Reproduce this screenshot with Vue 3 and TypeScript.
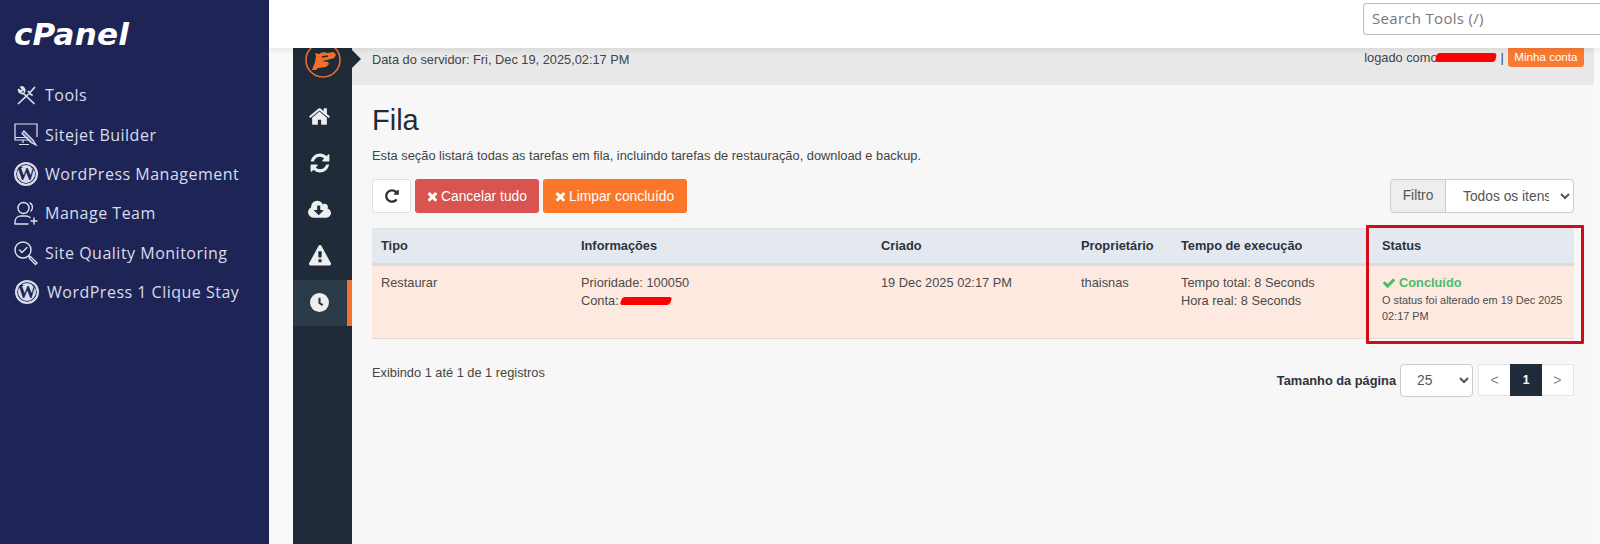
<script setup lang="ts">
const faHome = 'M1472 992v480q0 26-19 45t-45 19h-384v-384h-256v384h-384q-26 0-45-19t-19-45v-480q0-1 .5-3t.5-3l575-474 575 474q1 2 1 6zm223-69l-62 74q-8 9-21 11h-3q-13 0-21-7l-692-577-692 577q-12 8-24 7-13-2-21-11l-62-74q-8-10-7-23.5t11-21.5l719-599q32-26 76-26t76 26l244 204v-195q0-14 9-23t23-9h192q14 0 23 9t9 23v408l219 182q10 8 11 21.5t-7 23.5z'
const faRefresh = 'M1639 1056q0 5-1 7-64 268-268 434.500t-478 166.500q-146 0-282.500-55t-243.500-157l-129 129q-19 19-45 19t-45-19-19-45v-448q0-26 19-45t45-19h448q26 0 45 19t19 45-19 45l-137 137q71 66 161 102t187 36q134 0 250-65t186-179q11-17 53-117 8-23 30-23h192q13 0 22.500 9.500t9.500 22.500zm25-800v448q0 26-19 45t-45 19h-448q-26 0-45-19t-19-45 19-45l138-138q-148-137-349-137-134 0-250 65t-186 179q-11 17-53 117-8 23-30 23h-199q-13 0-22.500-9.500t-9.500-22.500v-7q65-268 270-434.500t480-166.500q146 0 284 55.500t245 156.500l130-129q19-19 45-19t45 19 19 45z'
const faCloud = 'M1280 928q0-14-9-23t-23-9h-224v-352q0-13-9.500-22.500t-22.500-9.500h-192q-13 0-22.500 9.500t-9.500 22.500v352h-224q-13 0-22.500 9.500t-9.500 22.500q0 14 9 23l352 352q9 9 23 9t23-9l351-351q10-12 10-24zm640 224q0 159-112.500 271.500t-271.500 112.500h-1088q-185 0-316.500-131.500t-131.500-316.500q0-130 70-240t188-165q-2-30-2-43 0-212 150-362t362-150q156 0 285.500 87t188.500 231q71-62 166-62 106 0 181 75t75 181q0 76-41 138 130 31 213.500 135.500t83.500 238.500z'
const faWarn = 'M1024 1375v-190q0-14-9.500-23.500t-22.500-9.500h-192q-13 0-22.500 9.500t-9.500 23.500v190q0 14 9.500 23.500t22.500 9.500h192q13 0 22.500-9.500t9.500-23.500zm-2-374l18-459q0-12-10-19-13-11-24-11h-220q-11 0-24 11-10 7-10 21l17 457q0 10 10 16.500t24 6.500h185q14 0 23.500-6.500t10.500-16.500zm-14-934l768 1408q35 63-2 126-17 29-46.500 46t-63.500 17h-1536q-34 0-63.500-17t-46.500-46q-37-63-2-126l768-1408q17-31 47-49t65-18 65 18 47 49z'
const faTimes = 'M1490 1322q0 40-28 68l-136 136q-28 28-68 28t-68-28l-294-294-294 294q-28 28-68 28t-68-28l-136-136q-28-28-28-68t28-68l294-294-294-294q-28-28-28-68t28-68l136-136q28-28 68-28t68 28l294 294 294-294q28-28 68-28t68 28l136 136q28 28 28 68t-28 68l-294 294 294 294q28 28 28 68z'
const faCheck = 'M1671 566q0 40-28 68l-724 724-136 136q-28 28-68 28t-68-28l-136-136-362-362q-28-28-28-68t28-68l136-136q28-28 68-28t68 28l294 295 656-657q28-28 68-28t68 28l136 136q28 28 28 68z'
const faRotate = 'M1664 256v448q0 26-19 45t-45 19h-448q-42 0-59-40-17-39 14-69l138-138q-148-137-349-137-104 0-198.500 40.500t-163.500 109.500-109.500 163.500-40.500 198.500 40.500 198.500 109.500 163.500 163.500 109.500 198.500 40.500q119 0 225-52t179-147q7-10 23-12 15 0 25 9l137 138q9 8 9.500 20.500t-7.500 22.500q-109 132-264 204.500t-327 72.500q-156 0-298-61t-245-164-164-245-61-298 61-298 164-245 245-164 298-61q147 0 284.500 55.500t244.500 156.500l130-129q29-31 70-14 39 17 39 59z'
</script>

<template>
  <div class="page">
    <aside class="side">
      <div class="logo">cPanel</div>
      <nav class="menu">
        <a class="item">
          <span class="ic">
            <svg width="22" height="22" viewBox="0 0 22 22" fill="none" stroke="#dfe2ee" stroke-width="1.7" stroke-linecap="round" stroke-linejoin="round">
              <path d="M3.500 19.500 13 10.500M15 8.500l4.500-5" />
              <path d="M13.500 7.500l1.500 2.500 2 1" />
              <path d="M19 19.500 8.500 9.500" />
              <path d="M8.500 9.500C6 10 3.500 8 3.500 5.500L6 7.500l2-1.500-2-3c2.500-.5 4.500 2 3.500 5" />
            </svg>
          </span>
          <span>Tools</span>
        </a>
        <a class="item">
          <span class="ic">
            <svg width="26" height="26" viewBox="0 0 26 26" fill="none" stroke="#dfe2ee" stroke-width="1.2">
              <path d="M17 18H2V2h22v13" />
              <path d="M2 15.500h13M10 18v3M6 22.500h10" />
              <path d="M11 9l9 9 3 5-5-2.500-9-9z" fill="#dfe2ee" fill-opacity=".45" />
            </svg>
          </span>
          <span>Sitejet Builder</span>
        </a>
        <a class="item">
          <span class="ic"><span class="wp">W</span></span>
          <span>WordPress Management</span>
        </a>
        <a class="item">
          <span class="ic">
            <svg width="26" height="26" viewBox="0 0 26 26" fill="none" stroke="#dfe2ee" stroke-width="1.4" stroke-linecap="round">
              <circle cx="10.500" cy="8" r="5.500" />
              <path d="M17 3c2.500 1 3.500 5.500 1 8M2 24v-2c0-4 3-6 6-6h5c1.500 0 3 .5 4 1.500M2 24h13M21 18v6M18 21h6" />
            </svg>
          </span>
          <span>Manage Team</span>
        </a>
        <a class="item">
          <span class="ic">
            <svg width="26" height="26" viewBox="0 0 26 26" fill="none" stroke="#dfe2ee" stroke-width="1.4" stroke-linecap="round">
              <circle cx="10" cy="10" r="8" />
              <path d="m6.500 10 2.500 2.500 5-5" />
              <path d="m16 16 2 1 6 6-1.500 1.500-6-6z" />
            </svg>
          </span>
          <span>Site Quality Monitoring</span>
        </a>
        <a class="item shifted">
          <span class="ic"><span class="wp">W</span></span>
          <span>WordPress 1 Clique Stay</span>
        </a>
      </nav>
    </aside>

    <div class="right">
      <header class="top">
        <div class="search">Search Tools (/)</div>
      </header>

      <div class="body">
        <div class="rail">
          <div class="brand">
            <svg width="36" height="36" viewBox="0 0 36 36">
              <circle cx="18" cy="18" r="17" fill="none" stroke="#f26f2c" stroke-width="1.500" />
              <path d="M7 28l3-8 1-6-1-3 4 1c3-2 6-2 8-1l7-1 2 3-2 3-7 2-5 1 6 1 1 2-3 3-8 1-2 2z" fill="#f26f2c" />
              <path d="M17 15l6-1" stroke="#1f2b38" stroke-width="1.600" fill="none" />
            </svg>
          </div>
          <div class="rail-item"><svg width="23" height="23" viewBox="0 0 1792 1792"><path :d="faHome" /></svg></div>
          <div class="rail-item"><svg width="22" height="22" viewBox="0 0 1792 1792"><path :d="faRefresh" /></svg></div>
          <div class="rail-item"><svg width="23" height="22" viewBox="0 0 1920 1792"><path :d="faCloud" /></svg></div>
          <div class="rail-item"><svg width="22" height="22" viewBox="0 0 1792 1792"><path :d="faWarn" /></svg></div>
          <div class="rail-item active">
            <svg width="19" height="19" viewBox="0 0 18 18">
              <circle cx="9" cy="9" r="9" />
              <path d="M9 4.500V9.500l3 2" fill="none" stroke="#2a3a47" stroke-width="2" />
            </svg>
          </div>
        </div>

        <div class="content">
          <div class="bar">
            <span class="notch"></span>
            <span class="date">Data do servidor: Fri, Dec 19, 2025,02:17 PM</span>
            <span class="who">
              <span class="who-label">logado como</span><span class="scrib s1"></span><span class="sep">|</span>
              <span class="acct">Minha conta</span>
            </span>
          </div>

          <main class="main">
            <h1>Fila</h1>
            <p class="desc">Esta seção listará todas as tarefas em fila, incluindo tarefas de restauração, download e backup.</p>

            <div class="tools">
              <button class="btn plain"><svg width="16" height="16" viewBox="0 0 1792 1792"><path :d="faRotate" /></svg></button>
              <button class="btn red"><svg width="11" height="11" viewBox="200 200 1408 1408"><path :d="faTimes" /></svg>Cancelar tudo</button>
              <button class="btn orange"><svg width="11" height="11" viewBox="200 200 1408 1408"><path :d="faTimes" /></svg>Limpar concluído</button>
              <div class="filter">
                <span class="f-label">Filtro</span>
                <select class="sel f-sel"><option>Todos os itens</option></select>
              </div>
            </div>

            <div class="table-wrap">
              <div class="row head">
                <div>Tipo</div>
                <div>Informações</div>
                <div>Criado</div>
                <div>Proprietário</div>
                <div>Tempo de execução</div>
                <div>Status</div>
              </div>
              <div class="row data">
                <div>Restaurar</div>
                <div>Prioridade: 100050<br />Conta:<span class="scrib s2"></span></div>
                <div>19 Dec 2025 02:17 PM</div>
                <div>thaisnas</div>
                <div>Tempo total: 8 Seconds<br />Hora real: 8 Seconds</div>
                <div>
                  <div class="ok"><svg width="14" height="14" viewBox="0 0 1792 1792"><path :d="faCheck" /></svg>Concluído</div>
                  <div class="ok-sub">O status foi alterado em 19 Dec 2025 02:17 PM</div>
                </div>
              </div>
              <div class="redbox"></div>
            </div>

            <div class="foot">
              <span class="count">Exibindo 1 até 1 de 1 registros</span>
              <div class="pag">
                <strong>Tamanho da página</strong>
                <select class="sel p-sel"><option>25</option></select>
                <div class="pager">
                  <span>&lt;</span>
                  <span class="cur">1</span>
                  <span>&gt;</span>
                </div>
              </div>
            </div>
          </main>
        </div>
        <div class="gutter"></div>
      </div>
    </div>
  </div>
</template>

<style>
html, body { margin: 0; background: #fff; }
</style>

<style scoped>
.page {
  display: flex;
  width: 1600px;
  height: 544px;
  overflow: hidden;
  font-family: "Liberation Sans", Arial, sans-serif;
  font-size: 12.800px;
  color: #4a4f55;
}
.side {
  width: 269px;
  flex: none;
  background: #1e2556;
  box-sizing: border-box;
  padding-top: 11px;
}
.logo {
  margin-left: 14px;
  height: 45px;
  font-family: "DejaVu Sans", sans-serif;
  font-size: 31px;
  line-height: 46px;
  font-weight: 700;
  font-style: italic;
  letter-spacing: .2px;
  color: #fff;
}
.menu { display: flex; flex-direction: column; margin-top: 19.500px; }
.item {
  display: flex;
  align-items: center;
  gap: 6px;
  height: 39.400px;
  padding-left: 13px;
  font-family: "Open Sans", sans-serif;
  font-size: 16px;
  letter-spacing: .5px;
  color: #d9dcea;
}
.item.shifted { padding-left: 14px; gap: 7px; }
.ic { width: 26px; height: 26px; display: flex; align-items: center; justify-content: center; }
.wp {
  width: 20px;
  height: 20px;
  border: 2px solid #d9dcea;
  border-radius: 50%;
  background: #d9dcea;
  color: #1e2556;
  font: 700 19px/20px "Liberation Serif", serif;
  letter-spacing: 0;
  text-align: center;
  overflow: hidden;
  box-shadow: inset 0 0 0 1px #1e2556;
}
.right { flex: 1; min-width: 0; display: flex; flex-direction: column; }
.top {
  height: 48px;
  flex: none;
  background: #fff;
  position: relative;
  z-index: 2;
  box-shadow: 0 2px 6px rgba(0,0,0,.08);
}
.search {
  position: absolute;
  left: 1094px;
  top: 3px;
  width: 260px;
  height: 32px;
  box-sizing: border-box;
  border: 1px solid #b9bcc0;
  border-right: 0;
  border-radius: 4px 0 0 4px;
  padding-left: 8px;
  line-height: 29px;
  font-family: "Open Sans", sans-serif;
  font-size: 15px;
  letter-spacing: .3px;
  color: #777;
}
.body { flex: 1; min-height: 0; display: flex; background: #f9f9f9; padding-left: 24px; }
.rail {
  width: 59px;
  flex: none;
  background: #1f2b38;
  display: flex;
  flex-direction: column;
}
.brand { height: 45.500px; flex: none; display: flex; justify-content: center; overflow: hidden; }
.brand svg { margin-top: -6px; flex: none; }
.rail-item { height: 46.500px; flex: none; display: flex; align-items: center; justify-content: center; fill: #eceeef; margin-right: 6px; }
.rail-item.active { background: #2a3a47; height: 46px; margin: 0; border-right: 5px solid #f26f2c; padding-right: 2px; box-sizing: border-box; }
.content { flex: 1; min-width: 0; display: flex; flex-direction: column; background: #f7f7f7; }
.gutter { width: 6px; flex: none; }
.bar {
  height: 37px;
  flex: none;
  background: #e8e8e8;
  position: relative;
  display: flex;
  justify-content: space-between;
  padding: 0 10px 0 20px;
  box-sizing: border-box;
}
.notch {
  position: absolute;
  left: 0;
  top: 2px;
  border-left: 9px solid #1f2b38;
  border-top: 9px solid transparent;
  border-bottom: 9px solid transparent;
}
.date { margin-top: 4px; line-height: 15px; font-size: 12.800px; color: #3f4449; }
.who { display: flex; align-items: flex-start; font-size: 12.800px; color: #3f4449; line-height: 16px; }
.who-label { margin-top: 2px; }
.scrib { display: inline-block; background: #f00; border-radius: 3px; }
.s1 { width: 60px; height: 9px; margin: 5px 0 0 -2px; transform: skewX(-12deg); }
.sep { margin: 2px 4px 0 5px; }
.acct {
  background: #f97a33;
  color: #fff;
  font-size: 11.600px;
  height: 19px;
  line-height: 17px;
  padding: 0 6.500px;
  border-radius: 0 0 3px 3px;
}
.main { padding: 0 20px; margin-right: -6px; }
h1 {
  margin: 19px 0 0;
  font-size: 29px;
  line-height: 32px;
  font-weight: 400;
  color: #1f2b38;
}
.desc { margin: 11px 0 0; font-size: 12.850px; line-height: 18px; color: #444; }
.tools { display: flex; align-items: flex-start; margin-top: 14px; gap: 4px; height: 34px; width: 1202px; }
.btn {
  height: 34px;
  box-sizing: border-box;
  border-radius: 3px;
  border: 1px solid transparent;
  font: 13.800px "Liberation Sans", Arial, sans-serif;
  color: #fff;
  padding: 0 0 0 11px;
  display: inline-flex;
  align-items: center;
  gap: 3px;
  fill: #fff;
  white-space: nowrap;
}
.plain { width: 39px; background: #fff; border-color: #ddd; fill: #2a3238; justify-content: center; padding: 0; }
.red { background: #d9534f; width: 124px; }
.orange { background: #fb7628; width: 144px; }
.filter { margin-left: auto; display: flex; height: 34px; }
.f-label {
  width: 56px;
  box-sizing: border-box;
  background: #eee;
  border: 1px solid #ccc;
  border-radius: 4px 0 0 4px;
  text-align: center;
  line-height: 32px;
  color: #555;
  font-size: 13.800px;
}
.sel {
  background: #fff;
  border: 1px solid #ccc;
  font: 13.800px "Liberation Sans", Arial, sans-serif;
  color: #555;
  outline: none;
}
.f-sel { width: 128px; height: 34px; border-left: 0; border-radius: 0 4px 4px 0; padding: 0 8px 0 13px; }
.table-wrap { position: relative; margin-top: 15px; width: 1202px; }
.row { display: grid; grid-template-columns: 200px 300px 200px 100px 201px 201px; }
.row > div { padding-left: 9px; box-sizing: border-box; }
.head {
  height: 38px;
  box-sizing: border-box;
  background: #e4e9f0;
  border-top: 1px solid #dfe3e8;
  border-bottom: 3px solid #dcdcdc;
  font-weight: 700;
  color: #2b333d;
  line-height: 34px;
}
.data {
  height: 73px;
  box-sizing: border-box;
  background: #fee9e1;
  border-bottom: 1px solid #e0dcd8;
  padding-top: 8px;
  line-height: 18px;
  color: #4b4b4b;
}
.s2 { width: 50px; height: 8px; margin-left: 2px; vertical-align: 0; transform: skewX(-20deg); }
.ok { display: flex; align-items: center; gap: 3px; color: #4cbb6c; font-weight: 700; line-height: 18px; fill: #4cbb6c; }
.ok-sub { font-size: 10.900px; line-height: 16px; color: #4b4b4b; }
.redbox {
  position: absolute;
  left: 994px;
  top: -3px;
  width: 218px;
  height: 119px;
  box-sizing: border-box;
  border: 3px solid #d00c18;
  border-radius: 1px;
}
.foot { display: flex; justify-content: space-between; width: 1202px; margin-top: 19px; }
.count { margin-top: 7px; color: #444; line-height: 16px; }
.pag { display: flex; align-items: flex-start; margin-top: 6px; }
.pag strong { color: #2b333d; margin-top: 9px; margin-right: 4px; line-height: 16px; }
.p-sel { width: 73px; height: 33px; border-radius: 4px; padding-left: 12px; }
.pager {
  margin-left: 5px;
  display: flex;
  height: 32px;
  background: #fff;
  border: 1px solid #e4e4e4;
  border-radius: 3px;
  box-sizing: border-box;
  width: 96px;
}
.pager span { flex: 1; text-align: center; line-height: 30px; color: #888; font-size: 14px; }
.pager .cur { background: #1f2b38; color: #fff; font-weight: 700; font-size: 12px; margin: -1px 0; line-height: 32px; }
</style>
